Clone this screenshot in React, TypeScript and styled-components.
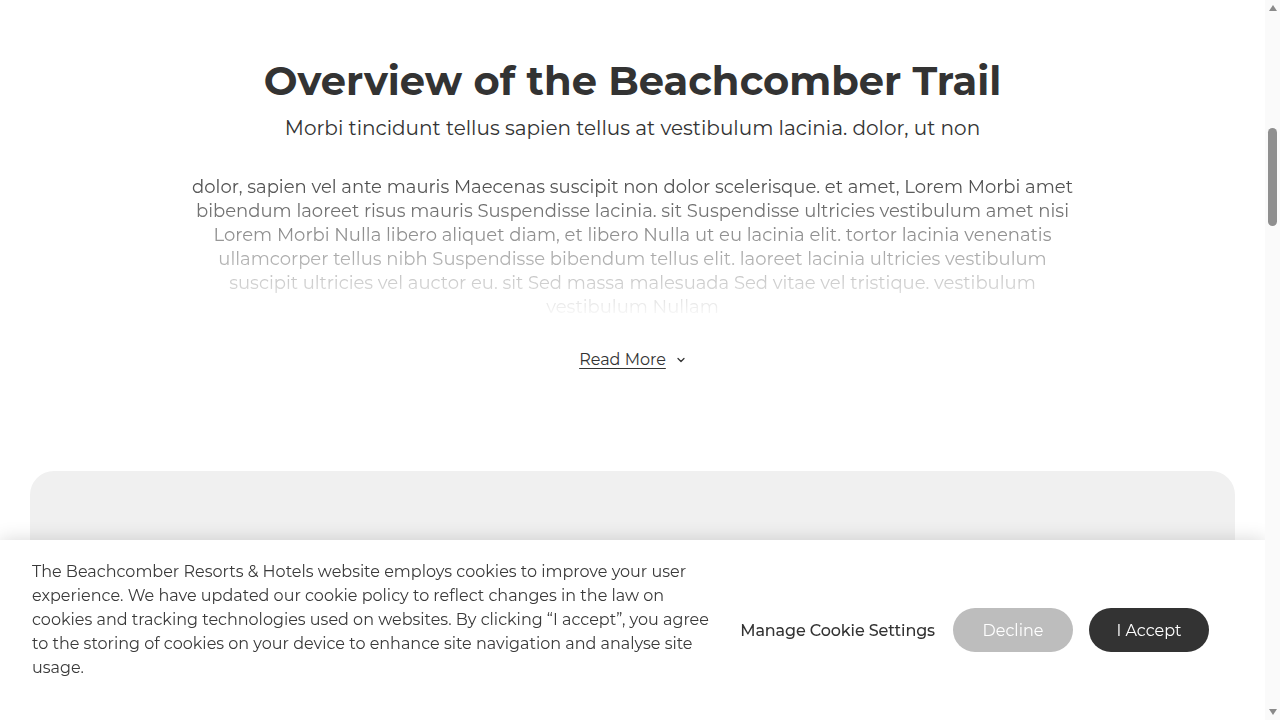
import React from "react";
import styled, { createGlobalStyle } from "styled-components";

const Global = createGlobalStyle`
  html { overflow: hidden; }
  body {
    margin: 0;
    background: #ffffff;
    font-family: "Montserrat", "Open Sans", "Noto Sans", sans-serif;
    color: #333333;
  }
  * { box-sizing: border-box; }
`;

const Page = styled.main`
  display: flex;
  flex-direction: column;
  align-items: center;
  padding: 57px 30px 0;
  margin-right: 15px;
  min-height: 1600px;
`;

const Title = styled.h1`
  margin: 0;
  font-size: 40px;
  line-height: 48px;
  font-weight: 700;
  color: #333333;
  text-align: center;
`;

const Subtitle = styled.p`
  margin: 9px 0 0;
  font-size: 20px;
  line-height: 28px;
  color: #333333;
  text-align: center;
`;

const Body = styled.p`
  margin: 33px 0 0;
  height: 140px;
  overflow: hidden;
  font-size: 18px;
  line-height: 24px;
  color: #444444;
  text-align: center;
  -webkit-mask-image: linear-gradient(to bottom, rgba(0,0,0,1) 0%, rgba(0,0,0,0.04) 100%);
  mask-image: linear-gradient(to bottom, rgba(0,0,0,1) 0%, rgba(0,0,0,0.04) 100%);
`;

const ReadMore = styled.button`
  margin-top: 33px;
  display: flex;
  align-items: center;
  gap: 9px;
  border: 0;
  background: none;
  padding: 0 0 0 1px;
  font: inherit;
  font-size: 16px;
  line-height: 24px;
  color: #333333;
  cursor: pointer;
  span { text-decoration: underline; text-underline-offset: 3px; }
`;

const Card = styled.section`
  margin-top: 99px;
  align-self: stretch;
  height: 800px;
  background: #f0f0f0;
  border-radius: 24px;
`;

const Banner = styled.div`
  position: fixed;
  left: 0;
  right: 15px;
  bottom: 0;
  height: 180px;
  background: #ffffff;
  box-shadow: 0 0 18px rgba(0, 0, 0, 0.16);
  display: flex;
  justify-content: space-between;
  padding: 20px 56px 0 32px;
`;

const BannerText = styled.p`
  margin: 0;
  font-size: 16px;
  line-height: 24px;
  color: #3a3a3a;
  align-self: flex-start;
`;

const Actions = styled.div`
  display: flex;
  align-items: center;
  align-self: center;
  margin-top: -20px;
  gap: 16px;
`;

const Manage = styled.button`
  border: 0;
  background: none;
  padding: 0;
  margin-right: 2px;
  font: inherit;
  font-size: 16px;
  font-weight: 500;
  letter-spacing: -0.12px;
  color: #333333;
  cursor: pointer;
`;

const Pill = styled.button<{ $dark?: boolean }>`
  width: 120px;
  height: 44px;
  border: 0;
  border-radius: 22px;
  font: inherit;
  font-size: 16px;
  color: #ffffff;
  background: ${(p) => (p.$dark ? "#333333" : "#bdbdbd")};
  cursor: pointer;
`;

const ScrollTrack = styled.div`
  position: fixed;
  top: 0;
  right: 0;
  bottom: 0;
  width: 15px;
  background: #fafafa;
  display: flex;
  flex-direction: column;
  align-items: center;
  justify-content: space-between;
  padding: 5px 0;
`;

const Arrow = styled.div<{ $down?: boolean }>`
  width: 0;
  height: 0;
  border-left: 4.5px solid transparent;
  border-right: 4.5px solid transparent;
  ${(p) =>
    p.$down
      ? "border-top: 6px solid #8a8a8a;"
      : "border-bottom: 6px solid #8a8a8a;"}
`;

const Thumb = styled.div`
  position: absolute;
  top: 128px;
  left: 3px;
  width: 9px;
  height: 98px;
  border-radius: 5px;
  background: #8f8f8f;
`;

const Chevron = () => (
  <svg width="12" height="12" viewBox="0 0 24 24" fill="none" stroke="#333" strokeWidth="2.5" strokeLinecap="round" strokeLinejoin="round">
    <path d="M6 9l6 6 6-6" />
  </svg>
);

export default function App() {
  return (
    <>
      <Global />
      <Page>
        <Title>Overview of the Beachcomber Trail</Title>
        <Subtitle>Morbi tincidunt tellus sapien tellus at vestibulum lacinia. dolor, ut non</Subtitle>
        <Body>
          dolor, sapien vel ante mauris Maecenas suscipit non dolor scelerisque. et amet, Lorem Morbi amet
          <br />
          bibendum laoreet risus mauris Suspendisse lacinia. sit Suspendisse ultricies vestibulum amet nisi
          <br />
          Lorem Morbi Nulla libero aliquet diam, et libero Nulla ut eu lacinia elit. tortor lacinia venenatis
          <br />
          ullamcorper tellus nibh Suspendisse bibendum tellus elit. laoreet lacinia ultricies vestibulum
          <br />
          suscipit ultricies vel auctor eu. sit Sed massa malesuada Sed vitae vel tristique. vestibulum
          <br />
          vestibulum Nullam
        </Body>
        <ReadMore>
          <span>Read More</span>
          <Chevron />
        </ReadMore>
        <Card />
      </Page>
      <Banner>
        <BannerText>
          The Beachcomber Resorts &amp; Hotels website employs cookies to improve your user
          <br />
          experience. We have updated our cookie policy to reflect changes in the law on
          <br />
          cookies and tracking technologies used on websites. By clicking “I accept”, you agree
          <br />
          to the storing of cookies on your device to enhance site navigation and analyse site
          <br />
          usage.
        </BannerText>
        <Actions>
          <Manage>Manage Cookie Settings</Manage>
          <Pill>Decline</Pill>
          <Pill $dark>I Accept</Pill>
        </Actions>
      </Banner>
      <ScrollTrack>
        <Arrow />
        <Thumb />
        <Arrow $down />
      </ScrollTrack>
    </>
  );
}
